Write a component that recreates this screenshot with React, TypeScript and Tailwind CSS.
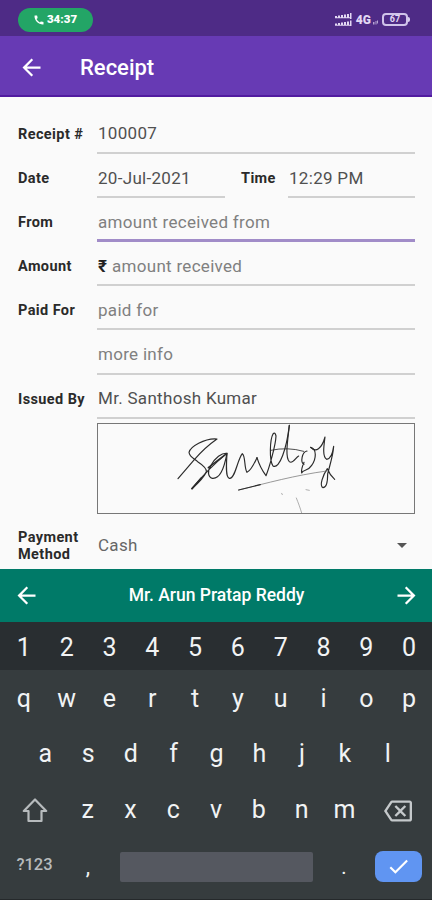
import React from 'react';
import { MdArrowBack, MdArrowForward, MdArrowDropDown, MdCall, MdCheck, MdOutlineBackspace } from 'react-icons/md';

const digits = ['1', '2', '3', '4', '5', '6', '7', '8', '9', '0'];
const topLetters = ['q', 'w', 'e', 'r', 't', 'y', 'u', 'i', 'o', 'p'];
const middleLetters = ['a', 's', 'd', 'f', 'g', 'h', 'j', 'k', 'l'];
const bottomLetters = ['z', 'x', 'c', 'v', 'b', 'n', 'm'];

interface FieldProps {
  label?: string;
  value?: string;
  placeholder?: string;
  prefix?: string;
  focused?: boolean;
}

function Label({ children }: { children?: React.ReactNode }) {
  return (
    <div className="w-[79px] shrink-0 whitespace-nowrap pt-[5px] text-[14.5px] font-bold leading-[17px] tracking-[0.4px] text-[#2a2a2a]">
      {children}
    </div>
  );
}

function Field({ label, value, placeholder, prefix, focused }: FieldProps) {
  return (
    <div className="flex h-[44.17px] items-center">
      <Label>{label}</Label>
      <div
        className={
          focused
            ? 'flex h-full flex-1 items-center border-b-[3px] border-[#a18cc8] pl-px pt-[8px]'
            : 'flex h-full flex-1 items-center border-b-2 border-[#d0d0d0] pl-px pt-[7px]'
        }
      >
        {prefix && <span className="mr-[5px] text-[17px] font-bold text-[#222]">{prefix}</span>}
        <span className={value ? 'text-[17px] tracking-[0.3px] text-[#505050]' : 'text-[17px] tracking-[0.3px] text-[#808080]'}>
          {value || placeholder}
        </span>
      </div>
    </div>
  );
}

function StatusBar() {
  return (
    <div className="flex h-9 items-center justify-between bg-[#4e2b86] pl-[18px] pr-[22px] pt-[3px]">
      <div className="flex h-6 w-[75px] items-center justify-center gap-[2px] rounded-full bg-[#23a566] pr-px text-white">
        <MdCall className="h-3 w-3" />
        <span className="text-[11.5px] font-black">34:37</span>
      </div>
      <div className="flex items-center text-[#e2d8f3]">
        <svg width="17" height="14" viewBox="0 0 17 14" fill="currentColor">
          <path d="M0 3h2v2H0zM3 2.500h2V5H3zM6 2h2v3H6zM9 1.500h2V5H9zM12 1h2v4h-2zM15 0h1.500v6H15zM0 10.500h2v2H0zM3 10h2v2.500H3zM6 9.500h2v3H6zM9 9h2v3.500H9zM12 8.500h2v4h-2zM15 7.500h1.500v5.500H15zM0 4.200h15v1H0zM0 11.800h15v1H0z" />
        </svg>
        <span className="ml-1 text-[12px] font-black leading-3">4G</span>
        <svg className="ml-[2px]" width="6" height="12" viewBox="0 0 6 12" fill="currentColor">
          <path d="M0 8h1.500v2.500H0zM2.500 7h1v3.500h-1zM4 6.500h1v3H4z" opacity="0.7" />
        </svg>
        <div className="ml-[3px] flex h-[13px] w-[26px] items-center justify-center rounded-[4px] border-2 border-[#d0c3ea]">
          <span className="text-[9px] font-bold leading-none">67</span>
        </div>
        <div className="h-[5px] w-[2px] rounded-r bg-[#d9cdf0]" />
      </div>
    </div>
  );
}

function Signature() {
  return (
    <svg
      className="block h-full w-full"
      viewBox="25 41 948 267"
      preserveAspectRatio="none"
      fill="none"
      stroke="#2b2b2b"
      strokeWidth="3.5"
      strokeLinecap="round"
      strokeLinejoin="round"
    >
      <g transform="translate(252 30)">
        <path d="M13 175L62 118Q95 80 130 56C110 54 94 59 75 69Q50 82 46 96C47 110 60 114 72 124C86 133 100 144 98 155Q88 176 55 205" />
        <path d="M55 205Q100 148 160 99C144 97 124 113 112 135C100 153 103 170 116 174C138 176 150 149 160 99" />
        <path d="M160 99C158 130 155 172 167 174C184 178 190 120 206 100C216 106 211 144 220 156Q232 151 250 112" />
        <path d="M55 205L83 173" strokeWidth="5" />
        <path d="M104 142L157 101" strokeWidth="4.500" />
      </g>
      <g transform="translate(498 30)">
        <path d="M4 112Q13 142 31 166C40 145 60 75 61 47Q58 34 52 41C43 57 40 119 52 137C72 148 93 83 101 15" />
        <path d="M101 15C97 55 87 110 101 124C112 133 120 111 129 107" />
        <path d="M154 92C139 95 133 126 145 132M165 81C184 85 182 116 168 135C156 154 143 146 138 158C136 146 141 135 145 126" />
        <path d="M165 81C180 98 198 86 208 50C204 80 200 109 213 117C225 116 231 98 234 78C233 104 221 139 216 161C216 185 213 202 202 202C190 197 202 164 215 145Q223 165 237 177" />
        <path d="M45 90Q96 79 144 93" strokeWidth="2.500" />
      </g>
      <path d="M447 239C533 218 615 195 711 182" stroke="#666" strokeWidth="2" />
      <path d="M447 239L512 223" strokeWidth="3.500" />
      <path d="M620 263C626 278 631 291 636 308M576 249L578 253M649 238L659 240" stroke="#888" strokeWidth="2" />
    </svg>
  );
}

function Key({ children }: { children: React.ReactNode }) {
  return <div className="flex w-[42.8px] shrink-0 items-center justify-center">{children}</div>;
}

function Keyboard() {
  return (
    <div className="flex-1 border-b border-[#25292b] bg-[#363c3e] text-[25px] leading-none text-[#f1f3f4]">
      <div className="flex h-12 bg-[#292e31] pl-[2.5px] pt-[3px]">
        {digits.map((d) => <Key key={d}>{d}</Key>)}
      </div>
      <div className="flex h-[57px] pl-[2.5px]">
        {topLetters.map((l) => <Key key={l}>{l}</Key>)}
      </div>
      <div className="flex h-[53px] justify-center pl-px">
        {middleLetters.map((l) => <Key key={l}>{l}</Key>)}
      </div>
      <div className="flex h-[57px] items-center justify-between pl-[22px] pr-[20px]">
        <svg className="mt-[4px]" width="26" height="25" viewBox="0 0 26 25" fill="none" stroke="#b7bbbd" strokeWidth="2.2">
          <path d="M13 1.500L1.800 13H6.500V23H19.500V13H24.200Z" strokeLinejoin="round" />
        </svg>
        <div className="flex h-full pt-px">
          {bottomLetters.map((l) => <Key key={l}>{l}</Key>)}
        </div>
        <MdOutlineBackspace className="mt-[5px] h-[28px] w-[28px] text-[#c5c9cb]" />
      </div>
      <div className="flex h-[59px] items-center pl-[13px] pr-[10px]">
        <span className="w-[43px] pb-[3px] text-center text-[16.5px] font-medium text-[#b7bbbd]">?123</span>
        <span className="w-16 text-center text-[22px]">,</span>
        <div className="h-[30px] w-[193px] rounded-[2px] bg-[#555860]" />
        <span className="flex-1 text-center text-[20px]">.</span>
        <div className="flex h-[31px] w-[47px] items-center justify-center rounded-[8px] bg-[#6095f2]">
          <MdCheck className="h-[25px] w-[25px] text-white" />
        </div>
      </div>
    </div>
  );
}

export default function App() {
  return (
    <div className="flex h-[900px] w-[432px] flex-col overflow-hidden bg-[#fafafa] font-['Roboto',sans-serif]">
      <StatusBar />

      {/* App bar */}
      <div className="flex h-[61px] items-center border-b-2 border-[#511ba0] bg-[#673ab4] pl-[18px] pt-[3px] text-white">
        <MdArrowBack className="h-[27px] w-[27px]" />
        <h1 className="ml-[35px] pt-px text-[22px] font-medium">Receipt</h1>
      </div>

      {/* Receipt form */}
      <div className="flex h-[472px] flex-col pl-[18px] pr-[17px] pt-[12.6px]">
        <Field label="Receipt #" value="100007" />
        <div className="flex justify-between">
          <div className="w-[207px]">
            <Field label="Date" value="20-Jul-2021" />
          </div>
          <div className="flex h-[44.17px] w-[174px] items-center">
            <div className="w-[47px] pt-[5px] text-[14.5px] font-bold leading-[17px] tracking-[0.4px] text-[#2a2a2a]">Time</div>
            <div className="flex h-full flex-1 items-center border-b-2 border-[#d0d0d0] pl-px pt-[7px] text-[17px] tracking-[0.3px] text-[#505050]">
              12:29 PM
            </div>
          </div>
        </div>
        <Field label="From" placeholder="amount received from" focused />
        <Field label="Amount" placeholder="amount received" prefix="₹" />
        <Field label="Paid For" placeholder="paid for" />
        <Field placeholder="more info" />
        <Field label="Issued By" value="Mr. Santhosh Kumar" />
        <div className="ml-[79px] mt-1 h-[91px] shrink-0 border border-[#777]">
          <Signature />
        </div>
        <div className="flex h-[55px] items-center pt-[8px]">
          <div className="-mt-[4px]">
            <Label>
              Payment
              <br />
              Method
            </Label>
          </div>
          <span className="flex-1 pl-px pt-[2px] text-[17px] tracking-[0.3px] text-[#666]">Cash</span>
          <MdArrowDropDown className="mr-[1px] h-6 w-6 text-[#555]" />
        </div>
      </div>

      {/* Customer switcher */}
      <div className="flex h-[53px] items-center justify-between bg-[#007a68] pl-[13px] pr-[12px] text-white">
        <MdArrowBack className="h-[27px] w-[27px]" />
        <span className="text-[17.5px] font-medium">Mr. Arun Pratap Reddy</span>
        <MdArrowForward className="h-[27px] w-[27px]" />
      </div>

      <Keyboard />
    </div>
  );
}
